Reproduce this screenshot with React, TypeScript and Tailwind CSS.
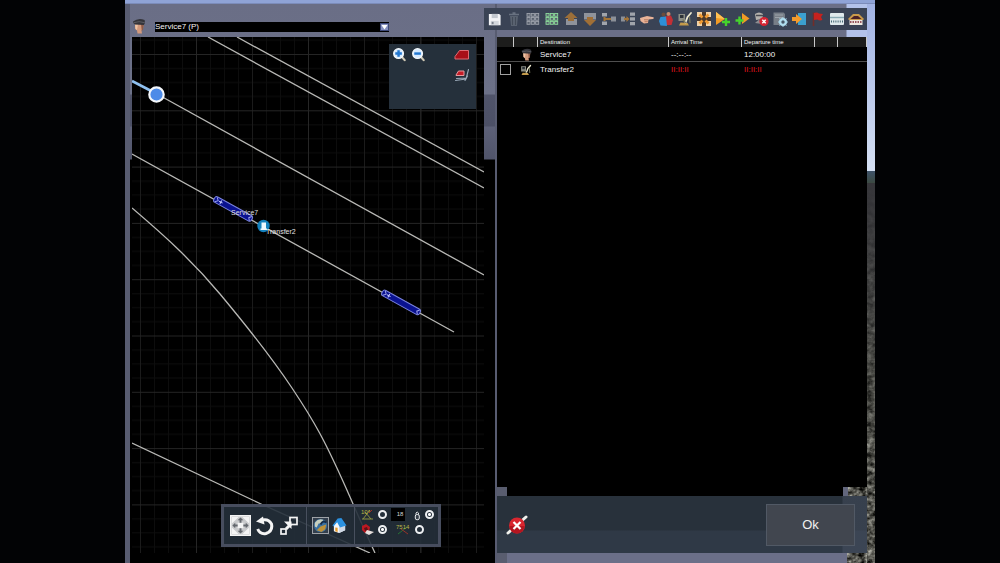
import React from "react";

const line = { fill: "none", strokeLinecap: "round", strokeLinejoin: "round" } as const;

function Glyph({ children, className = "size-4" }: { children: React.ReactNode; className?: string }) {
  return (
    <svg viewBox="0 0 16 16" className={`block shrink-0 ${className}`} aria-hidden="true">
      {children}
    </svg>
  );
}

function Driver({ className }: { className?: string }) {
  return (
    <Glyph className={className}>
      <path d="M4 6 L12.5 6 L12 11 L10.5 12.5 L11 15.5 L6.5 15.5 L6 12.5 L4.2 11Z" fill="#d39a7d" />
      <path d="M4 6.5 L7 6 L6 12 L4.5 11Z" fill="#f0c4a4" />
      <path d="M10 6 L12.8 6.5 L12 11.5 L10.8 13Z" fill="#8f5b48" />
      <path d="M2 3.5 Q7.5 -0.8 13.6 2 L14 5 L12.8 7 L4 6.5 L2.3 5Z" fill="#34343a" />
      <path d="M3 4.6 Q8 2.6 13.5 4.6" stroke="#5c5c62" {...line} />
    </Glyph>
  );
}

function Fuel({ className }: { className?: string }) {
  return (
    <Glyph className={className}>
      <rect x="1.5" y="3" width="6.5" height="7" fill="#8d8f86" />
      <rect x="3" y="4" width="3.5" height="3" fill="#2d3338" />
      <path d="M2 14.5 L12 14.5 L10.5 12 L3.5 11.5Z" fill="#c39a4a" />
      <path d="M8.5 11.5 L10.5 6 L14 2" stroke="#f0ecd2" strokeWidth="1.8" {...line} />
      <path d="M6 9 L8.5 11.5M12.5 6 L13 11.5" stroke="#77795e" strokeWidth="1.3" {...line} />
    </Glyph>
  );
}

function Squares({ color }: { color: string }) {
  return (
    <Glyph>
      {[2.5, 6.5, 10.5].map((y) =>
        [2, 6.3, 10.6].map((x) => <rect key={`${x}-${y}`} x={x} y={y} width="3.1" height="2.8" fill="#59616e" stroke={color} strokeWidth="0.9" />)
      )}
    </Glyph>
  );
}

function Plus({ x, y }: { x: number; y: number }) {
  return <path d={`M${x - 4} ${y}H${x + 4}M${x} ${y - 4}V${y + 4}`} stroke="#45d32c" strokeWidth="2.4" />;
}

const tools: { name: string; icon: React.ReactNode }[] = [
  {
    name: "Save",
    icon: (
      <Glyph className="size-[15px]">
        <path d="M2 2H13L14.5 3.5V14H2Z" fill="#f3f4f7" />
        <rect x="5" y="2" width="6.5" height="4.5" fill="#c3c8d0" />
        <rect x="4" y="9.5" width="8.5" height="4.5" fill="#d3d7dd" />
        <rect x="5" y="10.5" width="2" height="2.5" fill="#7b828e" />
      </Glyph>
    ),
  },
  {
    name: "Delete",
    icon: (
      <Glyph>
        <path d="M4 5H12L11 15H5Z" fill="#596270" />
        <path d="M3 3.5H13M6.5 2H9.5" stroke="#687180" strokeWidth="1.6" />
        <path d="M6.5 6V14M9.5 6V14" stroke="#434b58" />
      </Glyph>
    ),
  },
  { name: "Clear selection", icon: <Squares color="#9da2ab" /> },
  { name: "Select all", icon: <Squares color="#8ddc9b" /> },
  {
    name: "Move up",
    icon: (
      <Glyph>
        <rect x="3" y="8" width="11" height="6" fill="#8f939b" />
        <path d="M8 1 L14.5 7 L11 7 L11 10 L5 10 L5 7 L1.5 7Z" fill="#9c6f39" />
      </Glyph>
    ),
  },
  {
    name: "Move down",
    icon: (
      <Glyph>
        <rect x="2" y="2" width="12" height="6.5" fill="#8f939b" />
        <path d="M8 15 L14 9 L11 9 L11 6 L5 6 L5 9 L2 9Z" fill="#a06f36" />
      </Glyph>
    ),
  },
  {
    name: "Insert from left",
    icon: (
      <Glyph>
        <rect x="1" y="2" width="5" height="3.5" fill="#a0a4ab" />
        <rect x="1" y="10.5" width="5" height="3.5" fill="#a0a4ab" />
        <rect x="10" y="5.5" width="5" height="5" fill="#8b9098" />
        <path d="M3.5 6V10M3.5 8H10" stroke="#a37437" strokeWidth="2" />
      </Glyph>
    ),
  },
  {
    name: "Insert from right",
    icon: (
      <Glyph>
        <rect x="10" y="1.5" width="5" height="3.3" fill="#a0a4ab" />
        <rect x="10" y="6.3" width="5" height="3.3" fill="#a0a4ab" />
        <rect x="10" y="11" width="5" height="3.3" fill="#a0a4ab" />
        <rect x="1" y="5.5" width="4" height="5" fill="#8b9098" />
        <path d="M4 8H8" stroke="#a37437" strokeWidth="2.2" />
        <path d="M6.5 5 L9.5 8 L6.5 11Z" fill="#a37437" />
      </Glyph>
    ),
  },
  {
    name: "Pick",
    icon: (
      <Glyph>
        <path d="M1 7 L8 5 L14.5 6.3 Q15.5 7.5 14 8 L9.5 8.5 L9 12 L5 12.5 L1.5 10Z" fill="#e9b398" />
        <path d="M5 8.8H9M5.5 10.7H8.8" stroke="#a8694f" strokeWidth="0.8" />
      </Glyph>
    ),
  },
  {
    name: "Passengers",
    icon: (
      <Glyph>
        <circle cx="5.5" cy="3.5" r="2" fill="#6d4b3b" />
        <circle cx="10.5" cy="3" r="2" fill="#c88e70" />
        <path d="M7 5.5 L13 4.5 L15 9 L13.5 14 L8 14Z" fill="#c22f35" />
        <path d="M2.5 6 L8 5.5 L9 15 L2.5 14.5 L1 10Z" fill="#2d8fd7" />
      </Glyph>
    ),
  },
  { name: "Refuel", icon: <Fuel className="size-4" /> },
  {
    name: "Couple all",
    icon: (
      <Glyph>
        <rect x="1" y="1" width="14" height="14" fill="#4b3a2c" />
        {[1, 10].map((x) => [1, 10].map((y) => <rect key={`${x}-${y}`} x={x} y={y} width="5" height="5" fill="#f0d2a8" />))}
        <path d="M3.5 3.5 L6.5 6.5M12.5 3.5 L9.5 6.5M3.5 12.5 L6.5 9.5M12.5 12.5 L9.5 9.5" stroke="#ef9a32" strokeWidth="2.8" />
      </Glyph>
    ),
  },
  {
    name: "Add after",
    icon: (
      <Glyph>
        <path d="M1 1 L10 8 L1 14Z" fill="#f29b25" />
        <path d="M1 1 L10 8 L1 7Z" fill="#ffc052" />
        <Plus x={11} y={11} />
      </Glyph>
    ),
  },
  {
    name: "Add before",
    icon: (
      <Glyph>
        <path d="M8 2 L15.5 7.5 L8 13Z" fill="#f29b25" />
        <Plus x={5.5} y={9.5} />
      </Glyph>
    ),
  },
  {
    name: "Remove driver",
    icon: (
      <Glyph>
        <path d="M2 3 Q6 0 10 3 L9.5 8 L3 9Z" fill="#b5b2ad" />
        <path d="M3 4.5H10" stroke="#494a50" strokeWidth="1.5" />
        <path d="M2 12 L6 8.5 L9 13Z" fill="#8c8d91" />
        <circle cx="11" cy="10.5" r="4.6" fill="#d62432" />
        <path d="M9.3 8.8 L12.7 12.2M12.7 8.8 L9.3 12.2" stroke="#fff" strokeWidth="1.5" />
      </Glyph>
    ),
  },
  {
    name: "Settings",
    icon: (
      <Glyph>
        <path d="M1.5 1.5H11.5L13 3V14H1.5Z" fill="#777e87" />
        <path d="M3 4H11M3 6.5H11" stroke="#9da3aa" />
        <circle cx="11" cy="11" r="3" fill="none" stroke="#b4e0f1" strokeWidth="2" />
        <path d="M11 6V16M6 11H16M7.5 7.5 L14.5 14.5M14.5 7.5 L7.5 14.5" stroke="#a5d5e8" strokeWidth="1" />
        <circle cx="11" cy="11" r="1.5" fill="#46596a" />
      </Glyph>
    ),
  },
  {
    name: "Enter portal",
    icon: (
      <Glyph>
        <rect x="7" y="2" width="8" height="12" fill="#3ba0cf" />
        <path d="M1 6H5V3L11 8L5 13V10H1Z" fill="#f39b2c" />
      </Glyph>
    ),
  },
  {
    name: "Flag",
    icon: (
      <Glyph>
        <path d="M3.5 1.5V15" stroke="#722d29" strokeWidth="1.6" />
        <path d="M4 2 Q7 1 9 2.5 L13 3 L11 6 L12.5 9 Q9 10 7.5 8.5 L4 9Z" fill="#c5221e" />
      </Glyph>
    ),
  },
  {
    name: "Platform",
    icon: (
      <Glyph>
        <rect x="1" y="2" width="14" height="12" rx="1" fill="#dfe9ec" />
        <path d="M1 6.5H15" stroke="#89aab4" strokeWidth="1.4" />
        <path d="M2 10.5H14" stroke="#466a76" strokeDasharray="1 1.2" strokeWidth="1.8" />
      </Glyph>
    ),
  },
  {
    name: "Depot",
    icon: (
      <Glyph>
        <path d="M0.5 7.5 L5 3H11L15.5 7.5V9H0.5Z" fill="#c99a4a" />
        <path d="M2.5 8 L6 5H10L13.5 8Z" fill="#4a2026" />
        <rect x="1.5" y="9" width="13" height="5" fill="#efe8df" />
        <path d="M2 11H14" stroke="#7b2635" strokeDasharray="1.5 1" strokeWidth="1.4" />
      </Glyph>
    ),
  },
];

function Ballast() {
  return (
    <svg className="absolute inset-0 block size-full" preserveAspectRatio="none" aria-hidden="true">
      <filter id="stones" x="0" y="0" width="100%" height="100%" colorInterpolationFilters="sRGB">
        <feTurbulence type="fractalNoise" baseFrequency="0.16 0.2" numOctaves="3" seed="4" />
        <feColorMatrix values="1.3 0 0 0 -0.31  1.3 0 0 0 -0.31  1.25 0 0 0 -0.31  0 0 0 0 1" />
      </filter>
      <rect width="100%" height="100%" filter="url(#stones)" />
    </svg>
  );
}

function Consist({ x, y }: { x: number; y: number }) {
  return (
    <g transform={`translate(${x} ${y}) rotate(29)`}>
      <rect x="-2" y="-3.1" width="43" height="6.2" rx="2.4" fill="#0a1290" stroke="#7a83dc" />
      <path d="M0 -2.5 L2.5 0 L0 2.5M39.5 -2.5 L37.5 0 L39.5 2.5" stroke="#9ba2ea" fill="none" />
      <path d="M3.5 0H7.5M5.5 -2V2" stroke="#c4c9ff" />
    </g>
  );
}

function TrackPlan() {
  return (
    <svg className="absolute inset-0 block size-full" viewBox="132 37 352 516" preserveAspectRatio="xMinYMin slice" role="img" aria-label="Track plan">
      <defs>
        <pattern id="grid" x="140" y="54" width="56" height="56.3" patternUnits="userSpaceOnUse">
          <path d="M14.5 0V57M28.5 0V57M42.5 0V57M0 14.5H56M0 28.5H56M0 42.5H56" stroke="#0d0d0d" />
          <path d="M0.5 0V57" stroke="#1b1b1b" />
          <path d="M0 0.5H56" stroke="#252525" />
        </pattern>
      </defs>
      <rect x="132" y="37" width="352" height="516" fill="#000" />
      <rect x="132" y="37" width="352" height="516" fill="url(#grid)" />
      <path d="M196.5 37V553M308.5 37V553M421 37V553" stroke="#262626" />
      <g fill="none" stroke="#b9b9b6" strokeWidth="1.3">
        <path d="M208 37 L484 188" />
        <path d="M237 37 L484 172" />
        <path d="M157 94 L484 275" />
        <path d="M132 154 L454 332" />
        <path d="M132 208 C160 232 190 258 220 294 S270 355 292 388 S325 440 350 497 S366 533 375 553" />
        <path d="M132 443 L261 504 L370 553" />
      </g>
      <path d="M132 81 L157 94" stroke="#8fc0f0" strokeWidth="2.6" />
      <circle cx="156.5" cy="94.5" r="7.2" fill="#4d8be8" stroke="#f4f7fb" strokeWidth="2.2" />
      <Consist x={216} y={199.5} />
      <Consist x={384} y={293} />
      <circle cx="263.5" cy="226" r="6.2" fill="#1581bd" />
      <path d="M261.5 222.5H266V228.5H267V230H260.5V228.5H261.5Z" fill="#eef8ff" />
    </svg>
  );
}

function Magnifier({ plus }: { plus: boolean }) {
  return (
    <Glyph className="size-[15px]">
      <path d="M10 10 L13.5 14" stroke="#cfc8b5" strokeWidth="2.4" {...line} />
      <circle cx="7" cy="7" r="5.2" fill="#d6eaff" stroke="#f5f9fc" strokeWidth="1.4" />
      <path d={plus ? "M3.5 7H10.5M7 3.5V10.5" : "M3.5 7H10.5"} stroke="#2277d0" strokeWidth="2.6" />
    </Glyph>
  );
}

function MapPalette() {
  return (
    <div className="absolute top-[7px] right-2 flex h-[65px] w-[87px] justify-between bg-[#25303b] px-[3px] pt-[3px]">
      <div className="flex items-start gap-1">
        <button aria-label="Zoom in"><Magnifier plus /></button>
        <button aria-label="Zoom out"><Magnifier plus={false} /></button>
      </div>
      <div className="flex flex-col gap-1 pr-[3px]">
        <button aria-label="Show engines">
          <Glyph>
            <path d="M1 12 L1 9.5 L5.5 3.5 L14.5 3.5 L14.5 12Z" fill="#a80f18" stroke="#dd6a72" />
          </Glyph>
        </button>
        <button aria-label="Show engine paths">
          <Glyph>
            <path d="M2 8 L4.5 4 L10 4 L10 8.5 L2 8.5Z" fill="#c41d27" stroke="#e59aa0" />
            <path d="M1.5 13.5 L12 12 L14.5 2.5M2.5 11.5 L12.5 11M11 13.5 L13.5 9" stroke="#9aa9b8" strokeWidth="1.1" {...line} />
          </Glyph>
        </button>
      </div>
    </div>
  );
}

function Dot({ group, label, checked }: { group: string; label: string; checked?: boolean }) {
  return (
    <input
      type="radio"
      name={group}
      aria-label={label}
      defaultChecked={checked}
      className="m-0 size-[9px] shrink-0 appearance-none rounded-full border-2 border-[#eef0f2] bg-[#25303b] checked:bg-[radial-gradient(circle,#ffffff_1px,#25303b_2px)]"
    />
  );
}

function EditBar() {
  return (
    <div className="absolute bottom-[6px] left-[89px] flex h-[43px] w-[220px] items-center border-[3px] border-[#474d5e] bg-[#25303b]/90">
      <div className="flex h-full w-[82px] items-center gap-1 pl-[6px]">
        <button aria-label="Move">
          <svg viewBox="0 0 22 22" className="block size-[21px]">
            <rect width="22" height="22" fill="#f4f4f4" />
            <rect x="1.5" y="1.5" width="19" height="19" fill="#c9cacc" />
            <path d="M2 2H9L2 9ZM20 2H13L20 9ZM2 20H9L2 13ZM20 20H13L20 13ZM8 8H14V14H8Z" fill="#f4f4f4" />
            <path d="M11 2.5 L14 5.5H12V8H10V5.5H8ZM11 19.5 L14 16.5H12V14H10V16.5H8ZM2.5 11 L5.5 8V10H8V12H5.5V14ZM19.5 11 L16.5 8V10H14V12H16.5V14Z" fill="#64686e" />
          </svg>
        </button>
        <button aria-label="Rotate">
          <svg viewBox="0 0 20 20" className="block size-5">
            <path d="M6 4.5 Q13 2 16.5 8 Q18 15 11 17.5 Q5 18.5 2.7 13" fill="none" stroke="#f4f4f4" strokeWidth="3" />
            <path d="M1 5.5 L8 0.5 L9.5 8.5Z" fill="#f4f4f4" />
          </svg>
        </button>
        <button aria-label="Stretch">
          <svg viewBox="0 0 20 20" className="block size-5">
            <rect x="11" y="1.5" width="7" height="7" fill="none" stroke="#f4f4f4" strokeWidth="1.7" />
            <rect x="2" y="13" width="5" height="5" fill="none" stroke="#f4f4f4" strokeWidth="1.7" />
            <path d="M7 13 L12 8" stroke="#f4f4f4" strokeWidth="3" />
            <path d="M5 5.5H12.5V13Z" fill="#f4f4f4" />
          </svg>
        </button>
      </div>
      <div className="flex h-full w-[49px] items-center gap-[3px] border-x border-[#48505e] pl-[5px]">
        <button aria-label="World">
          <svg viewBox="0 0 18 18" className="block size-[17px]">
            <rect x="0.5" y="0.5" width="17" height="17" fill="#333f4d" stroke="#a5a9ae" />
            <circle cx="9" cy="9" r="7" fill="#3971a2" />
            <path d="M3 6 Q7 1 12 3 L10 7 L7 7 L5 11 L3 10Z" fill="#c8d0be" />
            <path d="M9 10 L15 8 L14 13 L10 16 L5 14Z" fill="#bd9138" />
            <path d="M9 8 Q12 3 15 6" stroke="#142b47" strokeWidth="2" fill="none" />
          </svg>
        </button>
        <button aria-label="Home">
          <svg viewBox="0 0 16 18" className="block h-[17px] w-[15px]">
            <path d="M2 8.5 L5.5 4 L14 9 L14 14 L7.5 17 L2 15Z" fill="#f3f6fa" />
            <path d="M7.5 10.5 L14 9.5 V14 L7.5 17Z" fill="#cfd8e4" />
            <path d="M0.5 9 L6 1.5 L10 1 L15.5 9 L8.5 11 L5.5 5.5 L1.5 10Z" fill="#2b91e0" />
            <path d="M3.5 11 L6 11.5 V16 L3.5 15Z" fill="#e99b28" />
          </svg>
        </button>
      </div>
      <div className="flex h-full flex-1 flex-col gap-px pl-[6px] text-[6px] leading-[6px]">
        <div className="flex h-[14px] items-center gap-1">
          <svg viewBox="0 0 13 13" className="block size-[13px]" aria-hidden="true">
            <path d="M1 11H12M2 11L9 2M4 4L10 11" stroke="#8c9240" fill="none" />
            <path d="M8 5 L11 2" stroke="#a32c23" />
            <text x="0" y="6" fontSize="6" fill="#b9b446" fontFamily="Liberation Sans, sans-serif">10°</text>
          </svg>
          <Dot group="grade" label="Gradient" />
          <input aria-label="Length" defaultValue="18" className="block h-[13px] w-[14px] bg-black p-0 pl-1 text-center font-[inherit] text-[6px] text-[#d5d5d5]" />
          <svg viewBox="0 0 8 12" className="ml-1 block h-[13px] w-2" aria-hidden="true">
            <path d="M3 6V4.5Q4 2.5 5.5 4.5V6" stroke="#d9dcdf" fill="none" />
            <rect x="2.3" y="6" width="4" height="5.2" rx="1.6" fill="#38404a" stroke="#eceef0" />
          </svg>
          <Dot group="lock" label="Lock length" checked />
        </div>
        <div className="flex h-[14px] items-center gap-1">
          <svg viewBox="0 0 13 13" className="block size-[13px]" aria-hidden="true">
            <path d="M1 3 L5 1 L9 4 L8 9 L4 10 L1 7Z" fill="#bd1921" />
            <path d="M3 5 L6 4L7 7L4 8Z" fill="#5b1217" />
            <path d="M6 7 L13 9 L8 12 L4 10Z" fill="#e6dfdc" />
          </svg>
          <Dot group="grade" label="Paint" checked />
          <svg viewBox="0 0 16 13" className="ml-1 block h-[13px] w-4" aria-hidden="true">
            <path d="M3 11 L12 4" stroke="#267334" />
            <path d="M6 6 L13 11" stroke="#963228" />
            <text x="1" y="6" fontSize="6" fill="#b9b446" fontFamily="Liberation Sans, sans-serif">7514</text>
          </svg>
          <Dot group="lock" label="Show numbers" />
        </div>
      </div>
    </div>
  );
}

function MapPanel() {
  return (
    <section className="flex w-[49.6%] shrink-0 flex-col border-r-2 border-l-[5px] border-[#585c71] bg-[linear-gradient(#6a6e86_0px,#6c7188_90px,#50546a_91px,#4c5066_122px,#5d6178_123px,#50546a_155px,#000000_156px)]">
      <header className="flex h-[33px] shrink-0 items-start pt-[14px] pl-[1px]">
        <Driver className="size-4" />
        <div className="relative mt-1 ml-2 h-[10px] w-[234px]">
          <select aria-label="Service" className="block h-[10px] w-full appearance-none bg-black p-0 text-[8px] leading-[10px] text-[#f4f4f4]">
            <option>Service7 (P)</option>
          </select>
          <svg viewBox="0 0 9 8" className="pointer-events-none absolute top-[1px] right-0 block h-2 w-[9px]" aria-hidden="true">
            <rect width="9" height="8" fill="#3c4878" />
            <rect x="1" y="1" width="7" height="6" fill="#8590bf" />
            <path d="M1.5 2H7.5L4.5 6.5Z" fill="#fff" />
          </svg>
        </div>
      </header>
      <div className="relative mr-[11px] ml-[2px] flex-1 overflow-hidden">
        <TrackPlan />
        <span className="absolute top-[172px] left-[99px] text-[7px] leading-[8px] text-[#dcdcdc]">Service7</span>
        <span className="absolute top-[191px] left-[134px] text-[7px] leading-[8px] text-[#e4e4e4]">Transfer2</span>
        <MapPalette />
        <EditBar />
      </div>
      <div className="h-[10px] shrink-0" />
    </section>
  );
}

function Schedule() {
  const head = "h-[10px] border-r border-[#c9c9c9] p-0 pl-[2px] text-left text-[6px] leading-[8px] font-normal text-[#f2f2f2]";
  const cell = "h-[14px] p-0 pt-px pl-[2px] text-[8px] leading-[10px]";
  return (
    <div className="flex-1 bg-black">
      <table className="w-full table-fixed border-separate border-spacing-0">
        <colgroup>
          <col className="w-[17px]" />
          <col className="w-6" />
          <col />
          <col className="w-[73px]" />
          <col className="w-[73px]" />
          <col className="w-[23px]" />
          <col className="w-[29px]" />
        </colgroup>
        <thead className="bg-[#1d1d1c]">
          <tr>
            <th className={head} />
            <th className={head} />
            <th className={head}>Destination</th>
            <th className={head}>Arrival Time</th>
            <th className={head}>Departure time</th>
            <th className={head} />
            <th className={head} />
          </tr>
        </thead>
        <tbody className="text-[#f4f4f4] [&>tr:first-child>td]:h-[15px] [&>tr:first-child>td]:border-b [&>tr:first-child>td]:border-[#4e4e4e]">
          <tr>
            <td className={cell} />
            <td className={cell}><Driver className="ml-1 size-[13px]" /></td>
            <td className={cell}>Service7</td>
            <td className={cell}>--:--:--</td>
            <td className={cell}>12:00:00</td>
            <td className={cell} />
            <td className={cell} />
          </tr>
          <tr>
            <td className={cell}>
              <input type="checkbox" aria-label="Select Transfer2" className="m-0 ml-px block size-[11px] appearance-none border border-[#a2a2a2] checked:bg-[#a2a2a2]" />
            </td>
            <td className={cell}><Fuel className="ml-1 size-3" /></td>
            <td className={cell}>Transfer2</td>
            <td className={`${cell} text-[#e0141e]`}>II:II:II</td>
            <td className={`${cell} text-[#e0141e]`}>II:II:II</td>
            <td className={cell} />
            <td className={cell} />
          </tr>
        </tbody>
      </table>
    </div>
  );
}

function SchedulePanel() {
  return (
    <section className="flex min-w-0 flex-1 flex-col">
      <header className="flex h-[33px] shrink-0 items-start bg-[linear-gradient(to_left,#b3c2ea_20px,#6b6f87_21px)] pt-1">
        <div className="relative z-10 -ml-[13px] flex h-[22px] flex-1 items-center bg-[#3a4355] px-[1px]">
          {tools.map((t) => (
            <button key={t.name} aria-label={t.name} className="flex flex-1 justify-center">
              {t.icon}
            </button>
          ))}
        </div>
      </header>
      <Schedule />
      <footer className="shrink-0">
        <div className="flex h-[9px] justify-between bg-black">
          <span className="w-[10px] bg-[#595d6f]" />
          <span className="relative w-6 bg-[#62667c] pl-[5px]">
            <span className="relative block size-full"><Ballast /></span>
          </span>
        </div>
        <div className="flex h-[57px] items-center justify-between bg-[linear-gradient(to_left,#4e576966_24px,transparent_25px),linear-gradient(#28313b_34px,#2f3946_35px)] pr-3 pl-2">
          <button aria-label="Cancel">
            <svg viewBox="0 0 24 24" className="block size-6" aria-hidden="true">
              <path d="M3 20 L21 4" stroke="#f0f0ec" strokeWidth="3" strokeLinecap="round" />
              <circle cx="12" cy="12.5" r="8" fill="#d9262f" />
              <path d="M4.5 13 A7.5 7.5 0 0 0 19.5 13Z" fill="#b41620" />
              <path d="M8.5 9 L15.5 16M15.5 9 L8.5 16" stroke="#fff" strokeWidth="2.2" />
            </svg>
          </button>
          <button className="h-[42px] w-[89px] border border-[#515965] bg-[#41464f] text-[13px] leading-4 text-[#f1f1f1]">Ok</button>
        </div>
        <div className="flex h-[10px] bg-[#6b6f88]">
          <span className="w-[10px] bg-[#595d6f]" />
          <span className="relative ml-auto w-5"><Ballast /></span>
        </div>
      </footer>
    </section>
  );
}

function Scenery() {
  return (
    <aside className="flex w-2 shrink-0 flex-col" aria-hidden="true">
      <div className="h-[167px] bg-linear-to-b from-[#a2b3e4] to-[#d5e0f3]" />
      <div className="h-3 bg-linear-to-b from-[#3e5269] to-[#3c4a42]" />
      <div className="relative flex-1">
        <Ballast />
        <div className="absolute inset-0 bg-linear-to-b from-[#36363a] via-[#3a3b38]/60 to-transparent" />
      </div>
    </aside>
  );
}

export default function App() {
  return (
    <main className="flex min-h-screen justify-center bg-[#020305] font-['Liberation_Sans',Arial,sans-serif]">
      <div className="flex w-3/4 flex-col">
        <div className="h-1 shrink-0 border-b border-[#7c8cba] bg-[#8fa3d6]" />
        <div className="flex flex-1">
          <MapPanel />
          <SchedulePanel />
          <Scenery />
        </div>
      </div>
    </main>
  );
}
